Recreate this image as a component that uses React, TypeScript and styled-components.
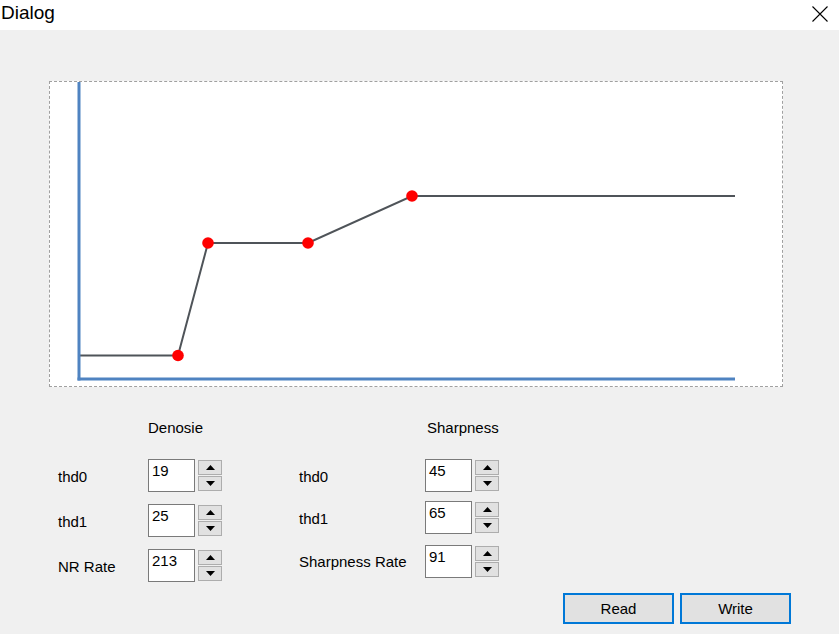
import React from 'react';
import styled, { createGlobalStyle } from 'styled-components';

const GlobalStyle = createGlobalStyle`
  html, body {
    margin: 0;
    padding: 0;
    background: #f0f0f0;
  }
  body {
    font-family: 'Liberation Sans', Arial, sans-serif;
    color: #000;
  }
`;

interface ISpinField {
  label: string;
  value: number;
}

const denoise: ISpinField[] = [
  { label: 'thd0', value: 19 },
  { label: 'thd1', value: 25 },
  { label: 'NR Rate', value: 213 },
];

const sharpness: ISpinField[] = [
  { label: 'thd0', value: 45 },
  { label: 'thd1', value: 65 },
  { label: 'Sharpness Rate', value: 91 },
];

// curve knots in chart coordinates
const knots = [
  { x: 178, y: 355.5 },
  { x: 208, y: 243 },
  { x: 308, y: 243 },
  { x: 412, y: 196 },
];

const Arrow: React.FC<{ down?: boolean }> = ({ down }) => (
  <svg width="9" height="5" viewBox="0 0 9 5">
    {down ? <polygon points="0,0 9,0 4.5,5" fill="#000" /> : <polygon points="0,5 9,5 4.5,0" fill="#000" />}
  </svg>
);

const SpinBox: React.FC<{ value: number }> = ({ value }) => (
  <Spin>
    <SpinInput>{value}</SpinInput>
    <SpinButtons>
      <SpinButton>
        <Arrow />
      </SpinButton>
      <SpinButton>
        <Arrow down />
      </SpinButton>
    </SpinButtons>
  </Spin>
);

const CurveChart: React.FC = () => {
  const path = [{ x: 78, y: 355.5 }, ...knots, { x: 735, y: 196 }]
    .map((p) => `${p.x},${p.y}`)
    .join(' ');
  return (
    <svg width="732" height="304" viewBox="50 82 732 304">
      <polyline points={path} fill="none" stroke="#4f5459" strokeWidth="2" />
      <line x1="79" y1="82" x2="79" y2="380.5" stroke="#4f83c1" strokeWidth="3" />
      <line x1="77.5" y1="379" x2="735" y2="379" stroke="#4f83c1" strokeWidth="3" />
      {knots.map((k) => (
        <circle key={`${k.x}-${k.y}`} cx={k.x} cy={k.y} r="5.8" fill="#ff0000" />
      ))}
    </svg>
  );
};

export default function App() {
  return (
    <Window>
      <GlobalStyle />
      <TitleBar>
        <Title>Dialog</Title>
        <CloseIcon width="16" height="16" viewBox="0 0 16 16">
          <path d="M0.5 0.5 L15.5 15.5 M15.5 0.5 L0.5 15.5" stroke="#000" strokeWidth="1.1" />
        </CloseIcon>
      </TitleBar>
      <Body>
        <ChartFrame>
          <CurveChart />
        </ChartFrame>
        <Form>
          <Group labelWidth={90} rows="33px 33px 33px" rowGap={12}>
            <Heading>Denosie</Heading>
            {denoise.map((f) => (
              <React.Fragment key={f.label}>
                <FieldLabel>{f.label}</FieldLabel>
                <SpinBox value={f.value} />
              </React.Fragment>
            ))}
          </Group>
          <Group labelWidth={126} rows="33px 33px 33px" rowGap={9} lastGap={12}>
            <Heading indent={2}>Sharpness</Heading>
            {sharpness.map((f) => (
              <React.Fragment key={f.label}>
                <FieldLabel>{f.label}</FieldLabel>
                <SpinBox value={f.value} />
              </React.Fragment>
            ))}
          </Group>
        </Form>
        <ButtonRow>
          <PushButton>Read</PushButton>
          <PushButton>Write</PushButton>
        </ButtonRow>
      </Body>
    </Window>
  );
}

const Window = styled.div`
  width: 839px;
  height: 634px;
  background: #f0f0f0;
  display: flex;
  flex-direction: column;
  overflow: hidden;
`;

const TitleBar = styled.div`
  height: 30px;
  background: #fff;
  display: flex;
  align-items: center;
  justify-content: space-between;
  padding: 0 11px 0 0;
  box-sizing: border-box;
`;

const Title = styled.span`
  font-size: 19px;
  line-height: 26px;
  padding-left: 1px;
  margin-top: -4px;
`;

const CloseIcon = styled.svg`
  margin-top: -3px;
`;

const Body = styled.div`
  padding: 51px 0 0 49px;
  display: flex;
  flex-direction: column;
`;

const ChartFrame = styled.div`
  width: 732px;
  height: 304px;
  border: 1px dashed #a0a0a0;
  background: #fff;

  svg {
    display: block;
  }
`;

const Form = styled.div`
  display: flex;
  gap: 77px;
  margin-top: 31px;
  padding-left: 9px;
  font-size: 15px;
`;

const Group = styled.div<{ labelWidth: number; rows: string; rowGap: number; lastGap?: number }>`
  display: grid;
  grid-template-columns: ${(p) => p.labelWidth}px auto;
  grid-template-rows: 20px 21px ${(p) => p.rows.split(' ').join(` ${p.rowGap}px `)};
  align-items: center;

  & > :nth-child(6),
  & > :nth-child(7) {
    margin-top: ${(p) => (p.lastGap ?? p.rowGap) - p.rowGap}px;
  }
  & > :nth-child(2),
  & > :nth-child(3) {
    grid-row: 3;
  }
  & > :nth-child(4),
  & > :nth-child(5) {
    grid-row: 5;
  }
  & > :nth-child(6),
  & > :nth-child(7) {
    grid-row: 7;
  }
`;

const Heading = styled.div<{ indent?: number }>`
  grid-column: 2;
  grid-row: 1;
  line-height: 20px;
  padding-left: ${(p) => p.indent ?? 0}px;
`;

const FieldLabel = styled.div`
  grid-column: 1;
  line-height: 20px;
  padding-top: 2px;
`;

const Spin = styled.div`
  grid-column: 2;
  display: flex;
  align-items: flex-start;
  gap: 3px;
`;

const SpinInput = styled.div`
  width: 45px;
  height: 31px;
  border: 1px solid #7a7a7a;
  background: #fff;
  box-sizing: content-box;
  text-indent: 3px;
  line-height: 22px;
`;

const SpinButtons = styled.div`
  display: flex;
  flex-direction: column;
  gap: 1px;
  padding-top: 1px;
`;

const SpinButton = styled.div`
  width: 22px;
  height: 13px;
  border: 1px solid #adadad;
  background: #e1e1e1;
  display: flex;
  align-items: center;
  justify-content: center;
`;

const ButtonRow = styled.div`
  display: flex;
  gap: 6px;
  margin-top: 11px;
  padding-left: 514px;
`;

const PushButton = styled.button`
  width: 111px;
  height: 31px;
  border: 2px solid #0078d7;
  background: #e1e1e1;
  font-family: 'Liberation Sans', Arial, sans-serif;
  font-size: 15px;
  color: #000;
  padding: 0;
`;
